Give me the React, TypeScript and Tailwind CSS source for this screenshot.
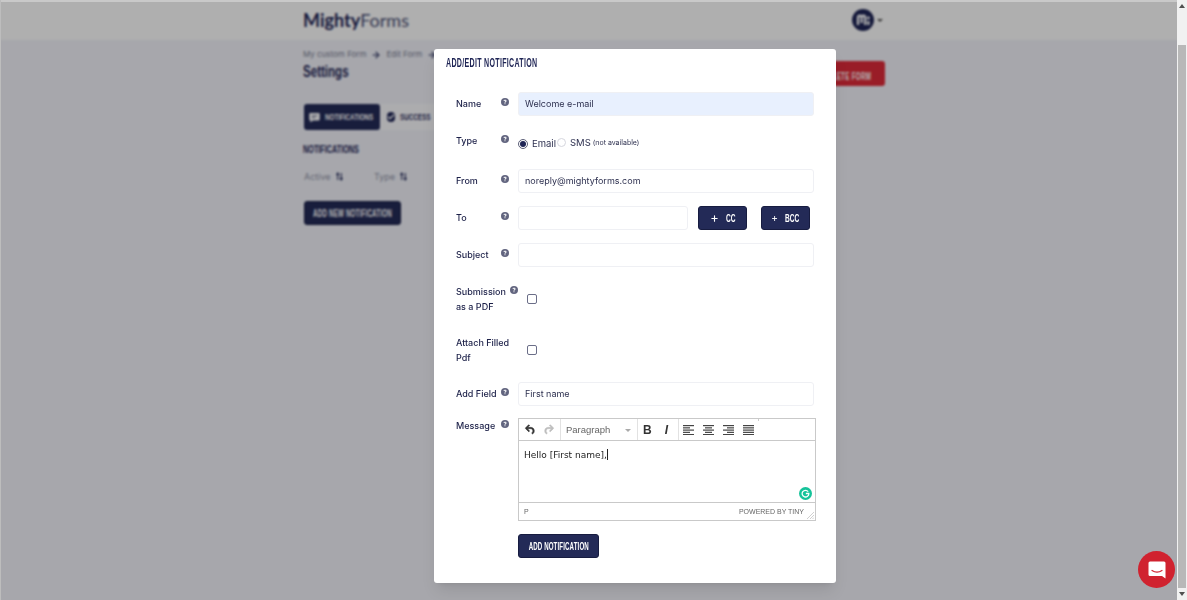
import { ArrowRight, Check, Plus } from "lucide-react";
import type { ReactNode } from "react";

// no condensed face is installed, so the Oswald style headings are squeezed
const Cond = ({ className, children }: { className: string; children: ReactNode }) => (
  <span className={`inline-block whitespace-nowrap font-['Liberation_Sans',sans-serif] font-bold ${className}`}>{children}</span>
);

const Help = ({ className = "" }: { className?: string }) => (
  <svg viewBox="0 0 16 16" className={`w-2 h-2 shrink-0 ${className}`}>
    <circle cx="8" cy="8" r="8" fill="#62657f" />
    <path d="M5 6.2c0-1.7 1.3-2.8 3.1-2.8 1.7 0 3 1 3 2.5 0 2.1-2.2 2.1-2.2 3.5H7c0-2.3 2-2.4 2-3.4 0-.5-.4-.9-1-.9s-1 .4-1.1 1z M7 10.5h1.9v1.9H7z" fill="#fff" />
  </svg>
);

const Field = ({ value, className = "w-[296px]" }: { value?: string; className?: string }) => (
  <div className={`h-6 flex items-center px-1.5 rounded-[3px] border border-[#eff0f4] text-[9px] text-[#2e3150] ${className}`}>
    {value}
  </div>
);

const Row = ({ label, children }: { label: string; children: ReactNode }) => (
  <div className="flex">
    <div className="w-[62px] shrink-0 flex items-start pt-1 text-[9px] leading-[15px] font-medium text-[#1c2048]">
      <span className="min-w-[45px] whitespace-nowrap">{label}</span>
      <Help className="mt-[2px]" />
    </div>
    {children}
  </div>
);

const NavyButton = ({ children, className = "" }: { children: ReactNode; className?: string }) => (
  <button className={`h-6 flex items-center rounded-[3px] bg-[#232a57] border border-[#171c40] text-white ${className}`}>
    {children}
  </button>
);

const SortIcon = () => (
  <svg viewBox="0 0 8 10" className="w-[7px] h-[9px]">
    <path d="M2 9V2M.6 3.4 2 1l1.4 2.4M6 1v7M4.6 6.6 6 9l1.4-2.4" fill="none" stroke="#1f2555" strokeWidth="1.2" />
  </svg>
);

const UndoIcon = ({ className = "" }: { className?: string }) => (
  <svg viewBox="0 0 24 24" className={`w-[13px] h-[13px] ${className}`}>
    <path d="M6.4 8H12c3.7 0 6.2 2 6.8 5.1.6 2.7-.4 5.6-2.3 6.8a1 1 0 0 1-1.4-2.4c1.1-.7 1.4-2.1 1-4-.5-2.1-1.7-3-4.1-3H6.4l3.3 3.3a1.2 1.2 0 1 1-1.7 1.7l-5-5a1.2 1.2 0 0 1 0-1.7l5-5a1.2 1.2 0 0 1 1.7 1.7z" fill="currentColor" stroke="currentColor" />
  </svg>
);

const AlignIcon = ({ rows }: { rows: [number, number][] }) => (
  <svg viewBox="0 0 11 10" className="w-[11px] h-2.5">
    {rows.map(([x, w], i) => (
      <rect key={i} x={x} y={i * 2.25} width={w} height="1.2" fill="#444" />
    ))}
  </svg>
);

const ToolSep = () => <div className="w-px self-stretch bg-[#e2e2e2]" />;

export default function App() {
  return (
    <div className="flex h-[600px] w-[1187px] overflow-hidden font-['Inter',sans-serif]">
      <div className="relative flex-1 overflow-hidden bg-[#eff0f7]">
        {/* page behind the dialog */}
        <header className="h-10 bg-[#fbfbfb] pb-0.5 pt-0.5 flex items-center justify-between pl-[303px] pr-[294px]">
          <span className="font-['Lato',sans-serif] text-[18px] text-[#1f2555]">
            <span className="font-bold">Mighty</span>
            <span className="text-[#4a4f73]">Forms</span>
          </span>
          <div className="flex items-center gap-[3px]">
            <svg viewBox="0 0 22 22" className="w-[22px] h-[22px]">
              <circle cx="11" cy="11" r="11" fill="#1f2555" />
              <path d="M6 16V8.6C6 6 9.6 6 9.6 8.6V14M9.6 8.6C9.6 6 13.2 6 13.2 8.6V16" fill="none" stroke="#fff" strokeWidth="2.2" />
              <circle cx="16.4" cy="9" r="1.4" fill="#fff" />
              <path d="M16.4 12v4" stroke="#fff" strokeWidth="2.2" />
            </svg>
            <div className="w-0 h-0 border-x-[3px] border-x-transparent border-t-[3px] border-t-[#555]" />
          </div>
        </header>
        <main className="ml-[303px] w-[582px]">
          <div className="flex justify-between items-start h-[64px]">
            <div>
              <div className="mt-2 flex items-center text-[8px] leading-[13px] text-[#7a7d92]">
                My custom Form
                <ArrowRight className="w-2.5 h-2.5 mx-[5px] text-[#1f2555]" strokeWidth={2.5} />
                Edit Form
                <ArrowRight className="w-2.5 h-2.5 mx-[5px] text-[#1f2555]" strokeWidth={2.5} />
              </div>
              <h1 className="leading-5 text-[#1f2555]">
                <Cond className="text-[17px] scale-x-[0.68] origin-left">Settings</Cond>
              </h1>
            </div>
            <button className="mt-[21px] w-[100px] h-[25px] rounded-[3px] bg-[#dc2a38] text-white text-right pr-[14px]">
              <Cond className="text-[10px] tracking-[0.5px] scale-x-[0.62] origin-right">DELETE FORM</Cond>
            </button>
          </div>
          <div className="ml-px flex h-[26px]">
            <div className="w-[76px] rounded-[3px] bg-[#232a57] text-white flex items-center pl-[5px] gap-[5px]">
              <svg viewBox="0 0 12 12" className="w-[11px] h-[11px] shrink-0">
                <path d="M1.5 1h9A1.2 1.2 0 0 1 11.7 2.2v6A1.2 1.2 0 0 1 10.5 9.4H4.2L1.6 11.4V9.4H1.5A1.2 1.2 0 0 1 .3 8.2v-6A1.2 1.2 0 0 1 1.5 1z" fill="#fff" />
                <path d="M3 4h6M3 6.2h4" stroke="#232a57" strokeWidth="0.8" />
              </svg>
              <Cond className="text-[9.5px] scale-x-[0.66] origin-left">NOTIFICATIONS</Cond>
            </div>
            <div className="w-[60px] bg-[#f7f7fa] text-[#1f2555] flex items-center pl-[7px] gap-[5px]">
              <span className="w-[10px] h-[10px] rounded-full bg-[#1f2555] flex items-center justify-center">
                <Check className="w-2 h-2 text-white" strokeWidth={4} />
              </span>
              <Cond className="text-[9.5px] scale-x-[0.66] origin-left">SUCCESS</Cond>
            </div>
          </div>
          <h2 className="mt-[13px] leading-[13px] flex text-[#1f2555]">
            <Cond className="text-[11px] scale-x-[0.66] origin-left">NOTIFICATIONS</Cond>
          </h2>
          <div className="mt-[14px] ml-px flex items-center text-[9px] leading-[13px] text-[#8f92a5]">
            <span className="w-8">Active</span>
            <SortIcon />
            <span className="ml-[31px] w-[26px]">Type</span>
            <SortIcon />
          </div>
          <NavyButton className="mt-[18px] ml-px w-[97px] justify-center">
            <Cond className="text-[10px] tracking-[0.3px] scale-x-[0.62]">ADD NEW NOTIFICATION</Cond>
          </NavyButton>
        </main>

        {/* dim layer */}
        <div className="absolute inset-0 bg-black/30 backdrop-blur-[1px]" />
        <div className="absolute inset-x-0 top-0 h-0.5 bg-[#c9c9c9]" />
        <div className="absolute inset-y-0 left-0 w-px bg-[#bdbdbd]" />

        {/* dialog */}
        <div className="absolute left-[434px] top-[49px] w-[402px] h-[534px] bg-white rounded-[3px] shadow-lg">
          <h3 className="ml-3 mt-2 leading-[13px] flex text-[#1f2555]">
            <Cond className="text-[12px] tracking-[0.5px] scale-x-[0.59] origin-left">ADD/EDIT NOTIFICATION</Cond>
          </h3>
          <div className="mt-[22px] ml-[22px] flex flex-col gap-[13px]">
            <Row label="Name"><Field value="Welcome e-mail" className="w-[296px] bg-[#e8f0fe] border-[#e8f0fe]" /></Row>
            <Row label="Type">
              <div className="h-[27px] flex items-start text-[9.5px] text-[#2e3150]">
                <div className="mt-[9px] flex items-center">
                  <div className="w-2.5 h-2.5 rounded-full border border-[#5c5f78] flex items-center justify-center">
                    <div className="w-1.5 h-1.5 rounded-full bg-[#1f2555]" />
                  </div>
                  <span className="ml-1 leading-[11px]">Email</span>
                </div>
                <div className="mt-[8px] ml-px flex items-center leading-[11px]">
                  <div className="w-[9px] h-[9px] rounded-full border border-[#d5d6de]" />
                  <span className="ml-1">SMS</span>
                  <span className="ml-[2px] text-[7px]">(not available)</span>
                </div>
              </div>
            </Row>
            <Row label="From"><Field value="noreply@mightyforms.com" /></Row>
            <Row label="To">
              <div className="flex items-start">
                <Field className="w-[170px]" />
                <NavyButton className="ml-[10px] w-[49px] pl-[11px]">
                  <Plus className="w-[9px] h-[9px]" strokeWidth={3} />
                  <Cond className="ml-[7px] text-[11px] scale-x-[0.6] origin-left">CC</Cond>
                </NavyButton>
                <NavyButton className="ml-[14px] w-[49px] pl-[9px]">
                  <Plus className="w-[9px] h-[9px]" strokeWidth={3} />
                  <Cond className="ml-[7px] text-[11px] scale-x-[0.6] origin-left">BCC</Cond>
                </NavyButton>
              </div>
            </Row>
            <Row label="Subject"><Field /></Row>
            <div className="flex h-[38px]">
              <div className="w-[71px] shrink-0 flex items-start pt-1 text-[9px] leading-[15px] font-medium text-[#1c2048]">
                <span className="whitespace-nowrap">Submission<br />as a PDF</span>
                <Help className="ml-1 mt-[2px]" />
              </div>
              <div className="mt-[13.5px] w-2.5 h-2.5 rounded-[2px] border border-[#6b6e88]" />
            </div>
            <div className="flex h-[38px]">
              <div className="w-[71px] shrink-0 pt-1 text-[9px] leading-[15px] font-medium text-[#1c2048] whitespace-nowrap">
                Attach Filled<br />Pdf
              </div>
              <div className="mt-[13.5px] w-2.5 h-2.5 rounded-[2px] border border-[#6b6e88]" />
            </div>
            <Row label="Add Field"><Field value="First name" /></Row>
            <div className="flex -mt-px">
              <div className="w-[62px] shrink-0 flex items-start text-[9px] leading-[15px] font-medium text-[#1c2048]">
                <span className="min-w-[45px]">Message</span>
                <Help className="mt-[2px]" />
              </div>
              <div className="w-[298px]">
                {/* rich text editor */}
                <div className="relative h-[103px] border border-[#c9c9c9] flex flex-col bg-white">
                  <div className="h-[22px] flex items-center border-b border-[#c9c9c9] text-[#333]">
                    <div className="w-[41px] self-stretch flex items-center pl-[5px] gap-[5px]">
                      <UndoIcon />
                      <UndoIcon className="-scale-x-100 text-[#bdbdbd]" />
                    </div>
                    <ToolSep />
                    <div className="w-[76px] pt-px flex items-center pl-[5px] pr-[6px] justify-between font-['Liberation_Sans',sans-serif] text-[9.5px] text-[#666]">
                      Paragraph
                      <div className="w-0 h-0 border-x-[3px] border-x-transparent border-t-[3px] border-t-[#aaa]" />
                    </div>
                    <ToolSep />
                    <div className="w-[40px] flex items-center pl-[5px] gap-[13px] font-['Liberation_Sans',sans-serif] text-[12px] leading-none text-[#333]">
                      <span className="font-bold">B</span>
                      <span className="italic font-bold">I</span>
                    </div>
                    <ToolSep />
                    <div className="flex items-center pl-[4px] gap-[9px]">
                      <AlignIcon rows={[[0, 11], [0, 7], [0, 11], [0, 7], [0, 11]]} />
                      <AlignIcon rows={[[0, 11], [2, 7], [0, 11], [2, 7], [0, 11]]} />
                      <AlignIcon rows={[[0, 11], [4, 7], [0, 11], [4, 7], [0, 11]]} />
                      <AlignIcon rows={[[0, 11], [0, 11], [0, 11], [0, 11], [0, 11]]} />
                    </div>
                    <div className="self-start ml-[4px] w-px h-[2px] bg-[#ccc]" />
                  </div>
                  <div className="flex-1 px-[5px] pt-2 font-['DejaVu_Sans',sans-serif] text-[9px] leading-[12px] text-[#222] flex items-start">
                    Hello [First name],
                    <span className="w-px h-[11px] bg-[#222]" />
                  </div>
                  <div className="h-[18px] pt-px border-t border-[#c9c9c9] flex items-center justify-between pl-[5px] pr-[11px] font-['Liberation_Sans',sans-serif] text-[7px] text-[#666]">
                    <span>P</span>
                    <span>POWERED BY TINY</span>
                  </div>
                  {/* grammarly badge */}
                  <div className="absolute right-[3px] top-[68px] w-[13px] h-[13px] rounded-full bg-[#15c39a] flex items-center justify-center">
                    <svg viewBox="0 0 10 10" className="w-[9px] h-[9px]">
                      <path d="M8 3A3.7 3.7 0 1 0 8.7 5H5.4" fill="none" stroke="#fff" strokeWidth="1.4" />
                    </svg>
                  </div>
                  <svg viewBox="0 0 7 7" className="absolute right-[1px] bottom-[1px] w-[7px] h-[7px]">
                    <path d="M7 0 0 7M7 3 3 7M7 5.5 5.5 7" stroke="#bbb" strokeWidth="0.7" />
                  </svg>
                </div>
                <NavyButton className="mt-[13px] w-[81px] justify-center">
                  <Cond className="text-[11px] tracking-[0.2px] scale-x-[0.56]">ADD NOTIFICATION</Cond>
                </NavyButton>
              </div>
            </div>
          </div>
        </div>

        {/* chat widget */}
        <div className="absolute left-[1138px] top-[551px] w-[37px] h-[37px] rounded-full bg-[#d0222f] flex items-center justify-center">
          <svg viewBox="0 0 20 20" className="w-5 h-5">
            <path d="M3 1.5h14a1.5 1.5 0 0 1 1.5 1.5v15.5L15 16H3a1.5 1.5 0 0 1-1.5-1.5V3A1.5 1.5 0 0 1 3 1.5z" fill="#fff" />
            <path d="M5 10.5c3 2 7 2 10 0" fill="none" stroke="#d0222f" strokeWidth="1.2" strokeLinecap="round" />
          </svg>
        </div>
      </div>

      {/* scrollbar */}
      <div className="w-2.5 shrink-0 bg-[#f1f1f1] flex flex-col items-center">
        <div className="h-[12px] flex items-center">
          <div className="w-0 h-0 border-x-[3px] border-x-transparent border-b-[4px] border-b-[#505050]" />
        </div>
        <div className="mt-[33px] w-2 flex-1 bg-[#b8b8b8]" />
        <div className="h-[12px] flex items-center">
          <div className="w-0 h-0 border-x-[3px] border-x-transparent border-t-[4px] border-t-[#505050]" />
        </div>
      </div>
    </div>
  );
}
